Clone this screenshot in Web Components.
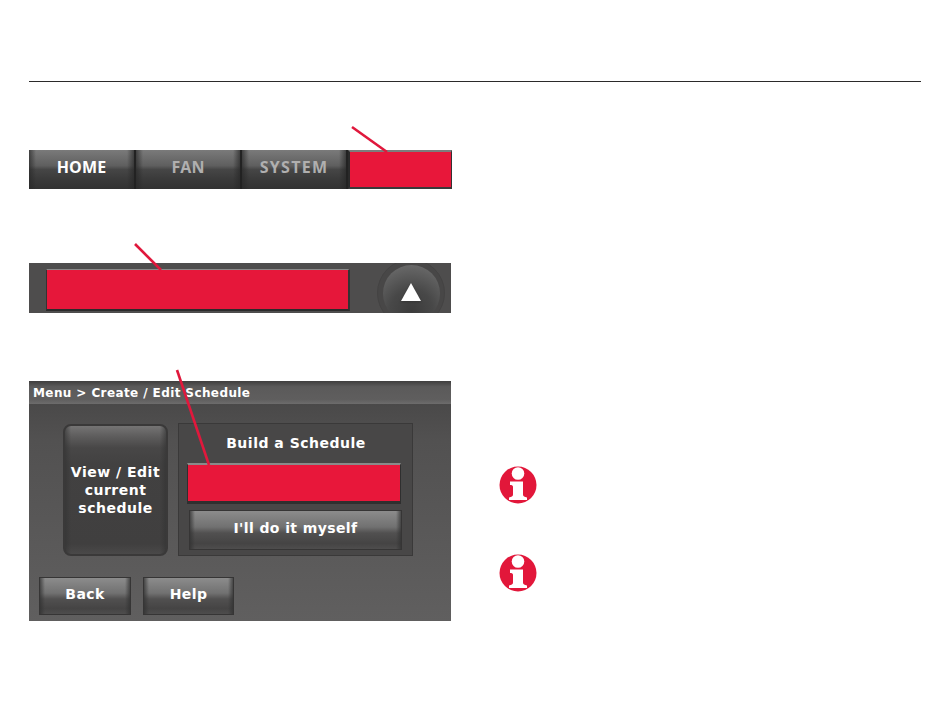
<!DOCTYPE html>
<html lang="en">
<head>
<meta charset="utf-8">
<title>Create / Edit Schedule</title>
<style>
html,body{margin:0;padding:0;background:#fff}
body{font-family:"DejaVu Sans",sans-serif}
</style>
</head>
<body>
<manual-page>
  <nav-tabs slot="left">
    <nav-tab style="flex-basis:107px;letter-spacing:.1px">HOME</nav-tab>
    <nav-tab dim style="flex-basis:106px;letter-spacing:0">FAN</nav-tab>
    <nav-tab dim style="flex-basis:106px;letter-spacing:1.3px">SYSTEM</nav-tab>
    <nav-tab red style="flex-basis:104px"></nav-tab>
  </nav-tabs>
  <status-panel slot="left"></status-panel>
  <schedule-screen slot="left"></schedule-screen>
  <info-icon slot="right"></info-icon>
  <info-icon slot="right"></info-icon>
</manual-page>
<script>
function def(name, html){
  customElements.define(name, class extends HTMLElement{
    constructor(){super();this.attachShadow({mode:'open'}).innerHTML=html;}
  });
}
def('manual-page',`<style>
:host{display:block;width:950px;height:716px;box-sizing:border-box;padding:81px 29px 0;background:#fff}
.rule{height:1px;background:#2b2a2a;width:892px}
.cols{display:flex;margin-top:68px}
.left{position:relative;width:423px;display:flex;flex-direction:column}
.right{margin-left:47px;padding-top:316px;display:flex;flex-direction:column;gap:50px}
svg{position:absolute;left:0;top:-30px;width:423px;height:340px;overflow:visible;pointer-events:none}
::slotted(status-panel){margin-top:74px}
::slotted(schedule-screen){margin-top:68px}
</style>
<div class="rule"></div>
<div class="cols">
  <div class="left"><slot name="left"></slot>
    <svg viewBox="29 120 423 340"><g stroke="#e0183c" stroke-width="2.6" fill="none">
      <path d="M352 127L387 152"/><path d="M135 244L161 270"/><path d="M177 370L209 465"/>
    </g></svg>
  </div>
  <div class="right"><slot name="right"></slot></div>
</div>`);
def('nav-tabs',`<style>
:host{display:flex;width:423px;height:39px;background:#333}
::slotted(nav-tab){flex:0 0 auto}
</style><slot></slot>`);
def('nav-tab',`<style>
:host{display:flex;align-items:center;justify-content:center;box-sizing:border-box;height:39px;
 border-right:2px solid #222;
 background:
  linear-gradient(90deg,rgba(40,40,40,.7) 0,transparent 7px,transparent calc(100% - 7px),rgba(40,40,40,.7) 100%),
  linear-gradient(#7a7a7a 0,#5f5f5f 40%,#464646 50%,#3a3a3a 75%,#323232 100%);
 color:#fff;font:700 16px/1 "Open Sans",sans-serif;letter-spacing:.9px;padding-bottom:5px}
:host([dim]){color:#b0afaf}
:host(:last-child){border-right:0}
:host([red]){background:#e8173a;padding:0;border:1px solid #333;border-top:2px solid #7d7d7d;border-bottom:2px solid #3a3a3a;border-left:2px solid #2a2a2a}
</style><slot></slot>`);
def('status-panel',`<style>
:host{display:flex;height:50px;width:422px;background:#4e4d4d;overflow:hidden;box-sizing:border-box;padding:6px 0 0 17px}
.red{width:301px;height:39px;flex:none;background:#e6173a;border-top:1px solid #8a8a8a;border-bottom:2px solid #2b2b2b;border-right:2px solid #333;border-left:1px solid #333}
.ring{width:68px;height:68px;border-radius:50%;margin:-10px 0 0 27px;border:1px solid #444343;flex:none;box-sizing:border-box;display:flex;align-items:center;justify-content:center;background:#484747}
.knob{width:57px;height:57px;border-radius:50%;background:radial-gradient(circle at 50% 80%,#3c3c3c 0,#484848 40%,#616161 75%,#747474 100%);display:flex;align-items:center;justify-content:center}
svg{width:20px;height:18px;margin-top:-3px;filter:drop-shadow(0 1px 1px #333)}
</style><div class="red"></div><div class="ring"><div class="knob"><svg viewBox="0 0 20 18"><path d="M10 0L20 18H0Z" fill="#fff"/></svg></div></div>`);
def('gloss-button',`<style>
:host{display:flex;align-items:center;justify-content:center;box-sizing:border-box;
 background:
  linear-gradient(90deg,rgba(50,50,50,.75) 0,transparent 5px,transparent calc(100% - 5px),rgba(50,50,50,.75) 100%),
  linear-gradient(#8c8c8c 0,#717171 42%,#515050 58%,#454444 85%,#4e4d4d 100%);
 border:1px solid #363535;color:#fff;font:700 14px/18px "DejaVu Sans",sans-serif;text-align:center;letter-spacing:.4px}
:host([flat]){background:linear-gradient(90deg,rgba(50,50,50,.6) 0,transparent 6px,transparent calc(100% - 6px),rgba(50,50,50,.6) 100%),linear-gradient(#757474 0,#5e5d5d 8%,#484747 17%,#424141 30%,#403f3f 92%,#4a4949 100%);border-radius:8px;border:2px solid #3a3939;letter-spacing:.5px}
:host([red]){background:#e8173a;border:1px solid #2f2f2f;border-top:2px solid #8a8a8a;border-bottom:3px solid #2f2f2f}
</style><slot></slot>`);
def('schedule-screen',`<style>
:host{display:flex;flex-direction:column;width:422px;height:240px;background:linear-gradient(#4a4949 23px,#525151 60px,#605f5f 100%);overflow:hidden}
header{height:23px;box-sizing:border-box;padding:4px 0 0 4px;background:linear-gradient(#3f3e3e 0,#5b5a5a 25%,#5f5e5e 80%,#6d6c6c 100%);color:#fff;font:700 12px/16px "DejaVu Sans",sans-serif;letter-spacing:.4px;white-space:nowrap}
.mid{display:flex;margin:19px 0 0 34px;gap:10px;align-items:flex-start}
.view{width:105px;height:132px;margin-top:1px}
.build{width:235px;height:133px;box-sizing:border-box;background:#484747;border:1px solid #3a3939;display:flex;flex-direction:column;padding-left:8px}
h2{margin:0;height:39px;box-sizing:border-box;padding-top:10px;color:#fff;font:700 14px/18px "DejaVu Sans",sans-serif;text-align:center;letter-spacing:.5px;width:220px;margin-left:-1px}
.red{width:214px;height:41px}
.my{width:213px;height:40px;margin:6px 0 0 2px;padding-bottom:4px}
.foot{display:flex;gap:12px;margin:21px 0 0 10px}
.back{width:92px;height:38px;padding-bottom:4px}.help{width:91px;height:38px;padding-bottom:4px}
</style>
<header>Menu &gt; Create / Edit Schedule</header>
<div class="mid">
  <gloss-button flat class="view">View / Edit<br>current<br>schedule</gloss-button>
  <div class="build">
    <h2>Build a Schedule</h2>
    <gloss-button red class="red"></gloss-button>
    <gloss-button class="my">I'll do it myself</gloss-button>
  </div>
</div>
<div class="foot">
  <gloss-button class="back">Back</gloss-button>
  <gloss-button class="help">Help</gloss-button>
</div>`);
def('info-icon',`<style>
:host{display:block;width:38px;height:38px}
svg{display:block;width:38px;height:38px}
</style><svg viewBox="0 0 38 38"><circle cx="19" cy="19" r="18.5" fill="#e2173a"/><circle cx="19" cy="7.5" r="6.3" fill="#fff"/><path d="M11 15.5H24V28.5C24 30.5 25.5 31 28 31.5V34H10V31.5C12.5 31 14 30.5 14 28.5V21C14 19.5 13 19 11 19Z" fill="#fff"/></svg>`);
</script>
</body>
</html>
